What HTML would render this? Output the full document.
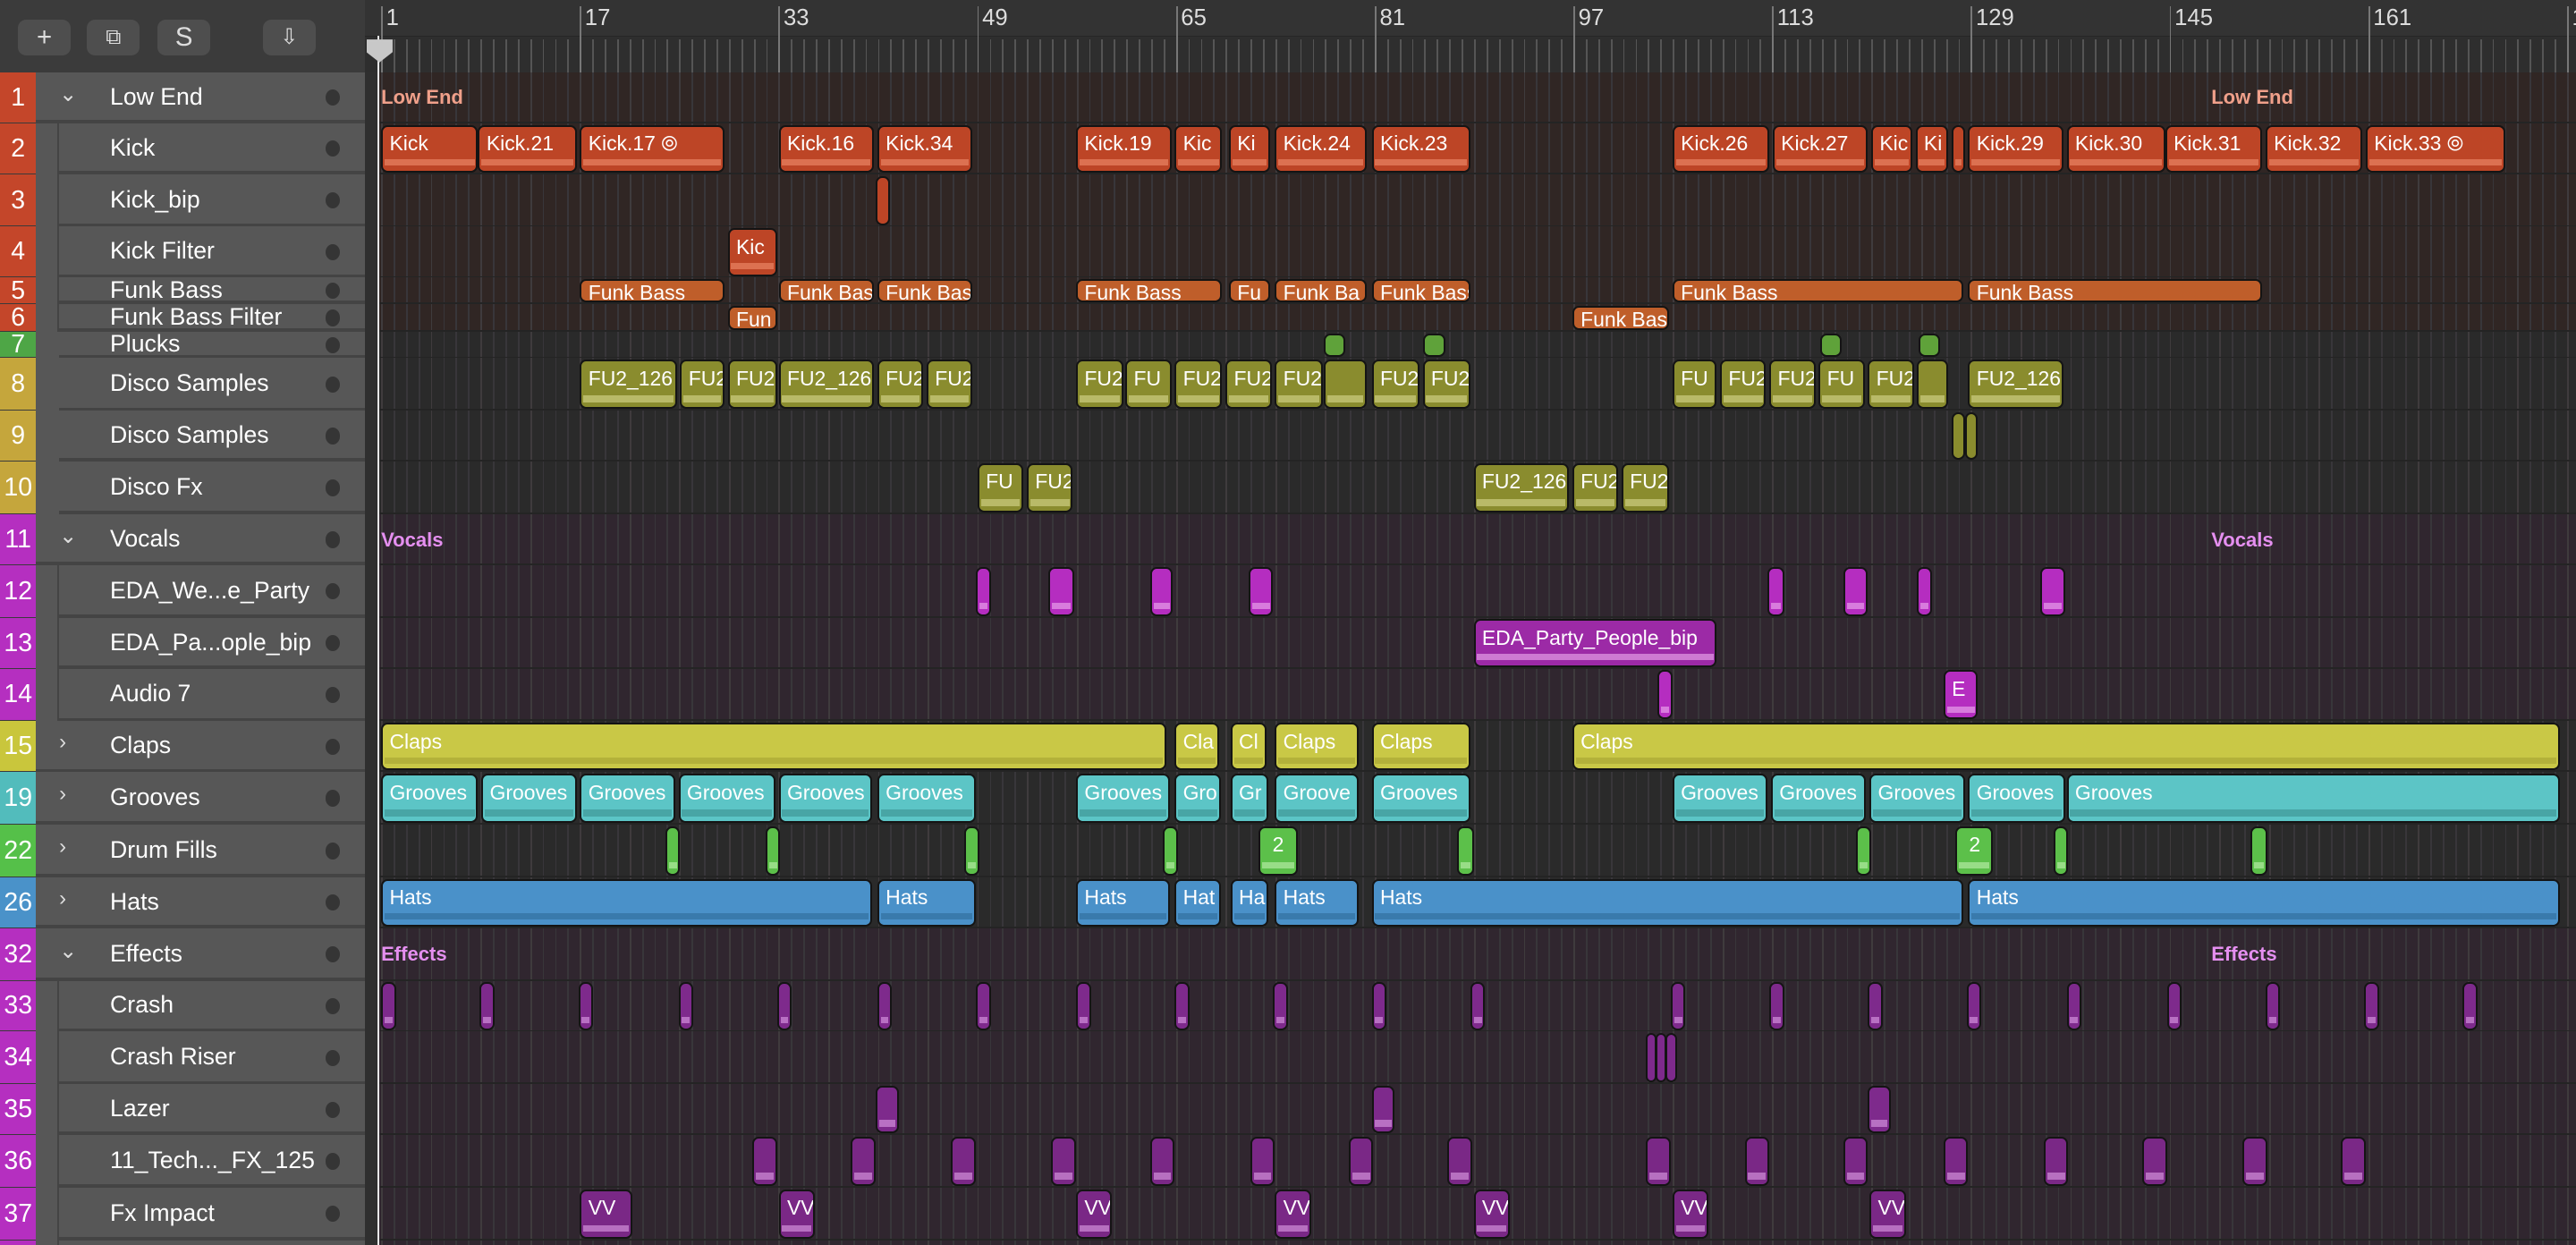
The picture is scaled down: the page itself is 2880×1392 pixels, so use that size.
<!DOCTYPE html>
<html><head><meta charset="utf-8"><style>
*{margin:0;padding:0;box-sizing:border-box}
html,body{width:2880px;height:1392px;overflow:hidden;background:#2b2b2b}
#s{position:absolute;left:0;top:0;width:1568px;height:758px;zoom:1.8367;font-family:"Liberation Sans",sans-serif;overflow:hidden;background:#2a2a2a}
.a{position:absolute}
.r{position:absolute;border:1.5px solid #141414;border-radius:4px;overflow:hidden;color:#fff;font-size:12.5px;white-space:nowrap;padding:3px 0 0 4px}
.r i{position:absolute;left:1px;right:1px;bottom:3px;height:4px;opacity:.6}
.num{position:absolute;left:0;width:22px;color:#fff;font-size:15.5px;text-align:center}
.nm{position:absolute;left:67px;color:#fff;font-size:14.5px}
.dot{position:absolute;left:198px;width:9px;height:10px;border-radius:50%;background:#353535}
.btn{position:absolute;top:12px;width:32px;height:22px;border-radius:5px;background:#4e4e4e;color:#ddd;font-size:16px;text-align:center;line-height:22px}
</style></head><body><div id="s">
<div class="a" style="left:0;top:0;width:222px;height:44px;background:#3b3b3b"></div>
<div class="btn" style="left:11px">+</div>
<div class="btn" style="left:53px;font-size:13px">⧉</div>
<div class="btn" style="left:96px">S</div>
<div class="btn" style="left:160px;font-size:13px">⇩</div>
<div class="a" style="left:222px;top:0;width:1346px;height:22px;background:#333"></div>
<div class="a" style="left:222px;top:22px;width:1346px;height:22px;background:#2e2e2e;border-top:1px solid #262626"></div>
<div class="a" style="left:0;top:44px;width:222px;height:714px;background:#575757"></div>
<div id="g"></div>
<div class="a" style="left:230px;top:22px;width:1px;height:736px;background:#e8e8e8"></div>
<div class="a" style="left:223px;top:24px;width:16px;height:14px;background:#c8c8c8;clip-path:polygon(0 0,100% 0,100% 55%,50% 100%,0 55%)"></div>
</div>
<script>
const S=document.getElementById('g');const ad=h=>S.insertAdjacentHTML('beforeend',h);
const bx=b=>232+(b-1)*7.56;
const rows=[[1,44,31,'Low End','#c4462a',1],[2,75,31,'Kick','#c4462a'],[3,106,32,'Kick_bip','#c4462a'],[4,138,31,'Kick Filter','#c4462a'],[5,169,16,'Funk Bass','#c4462a'],[6,185,17,'Funk Bass Filter','#c4462a'],[7,202,16,'Plucks','#4ea646'],[8,218,32,'Disco Samples','#c5a63c'],[9,250,31,'Disco Samples','#c5a63c'],[10,281,32,'Disco Fx','#c5a63c'],[11,313,31,'Vocals','#b52fc0',1],[12,344,32,'EDA_We...e_Party','#b52fc0'],[13,376,31,'EDA_Pa...ople_bip','#b52fc0'],[14,407,32,'Audio 7','#b52fc0'],[15,439,31,'Claps','#c9c63c',2],[19,470,32,'Grooves','#52bcbc',2],[22,502,32,'Drum Fills','#55c049',2],[26,534,31,'Hats','#4a92c9',2],[32,565,32,'Effects','#b52fc0',1],[33,597,31,'Crash','#b52fc0'],[34,628,32,'Crash Riser','#b52fc0'],[35,660,31,'Lazer','#b52fc0'],[36,691,32,'11_Tech..._FX_125','#b52fc0'],[37,723,32,'Fx Impact','#b52fc0'],[38,755,10,'','#b52fc0']];
const Y={};rows.forEach(r=>Y[r[0]]=[r[1],r[2]]);
function bg(y,h,c){ad(`<div class="a" style="left:222px;top:${y}px;width:1346px;height:${h}px;background:${c}"></div>`)}
bg(44,158,'#302624');bg(313,126,'#30262f');bg(565,193,'#30262f');
let gl='';for(let b=1;b<=178;b++){const x=bx(b);gl+=`<div class="a" style="left:${x}px;top:44px;width:1px;height:714px;background:${(b-1)%4==0?'#3f3b3d':'#38363a'}"></div>`;
gl+=`<div class="a" style="left:${x}px;top:${(b-1)%16==0?4:24}px;width:1px;height:${(b-1)%16==0?40:20}px;background:${(b-1)%16==0?'#777':'#555'}"></div>`;
if((b-1)%16==0)gl+=`<div class="a" style="left:${x+3}px;top:3px;color:#ddd;font-size:14px">${b}</div>`;}
ad(gl);
rows.forEach(r=>{bg(r[1]+r[2]-1,1,'#242424');
ad(`<div class="a" style="left:0;top:${r[1]}px;width:22px;height:${r[2]}px;background:${r[4]};border-bottom:1px solid #3a3a3a"></div>`);
if(r[3]){ad(`<div class="num" style="top:${r[1]+r[2]/2-9}px">${r[0]}</div>`);
ad(`<div class="a" style="left:${r[5]?22:36}px;top:${r[1]+r[2]-2}px;width:${r[5]?200:186}px;height:2px;background:#444"></div>`);
ad(`<div class="nm" style="top:${r[1]+r[2]/2-9}px">${r[3]}</div>`);
ad(`<div class="dot" style="top:${r[1]+r[2]/2-5}px"></div>`);
if(r[5])ad(`<div class="a" style="left:36px;top:${r[1]+r[2]/2-10}px;color:#ddd;font-size:13px">${r[5]==1?'⌄':'›'}</div>`);}
});
ad(`<div class="a" style="left:35px;top:75px;width:1px;height:127px;background:#444"></div><div class="a" style="left:35px;top:344px;width:1px;height:95px;background:#444"></div><div class="a" style="left:35px;top:597px;width:1px;height:161px;background:#444"></div>`);
ad(`<div class="a" style="left:222px;top:44px;width:9px;height:714px;background:#2f2f2f"></div>`);
[[59,'Low End','#f0a08a'],[329,'Vocals','#e58ff0'],[581,'Effects','#e58ff0']].forEach(t=>{ad(`<div class="a" style="left:232px;top:${t[0]-7}px;color:${t[2]};font-size:12px;font-weight:bold">${t[1]}</div><div class="a" style="left:1346px;top:${t[0]-7}px;color:${t[2]};font-size:12px;font-weight:bold">${t[1]}</div>`)});
function R(row,list,c,sub,ins){const [y,h]=Y[row];list.forEach(l=>{const [x1,x2,t]=l;
ad(`<div class="r" style="left:${x1}px;top:${y+1}px;width:${x2-x1}px;height:${h-2}px;background:${c};${ins||''}">${t||''}${sub?`<i style="background:${sub}"></i>`:''}</div>`)})}
R(2,[[232,291,'Kick'],[291,351,'Kick.21'],[353,441,'Kick.17 ⦾'],[474,532,'Kick.16'],[534,592,'Kick.34'],[655,713,'Kick.19'],[715,744,'Kic'],[748,773,'Ki'],[776,832,'Kick.24'],[835,895,'Kick.23'],[1018,1077,'Kick.26'],[1079,1137,'Kick.27'],[1139,1164,'Kic'],[1166,1186,'Ki'],[1188,1196,''],[1198,1256,'Kick.29'],[1258,1318,'Kick.30'],[1318,1377,'Kick.31'],[1379,1438,'Kick.32'],[1440,1525,'Kick.33 ⦾']],'#bd4526','#f0906e');
R(3,[[533,542,'']],'#bd4526');
R(4,[[443,473,'Kic']],'#bd4526','#f0906e');
const fb='font-size:12.5px;padding-top:0;line-height:15px';
R(5,[[353,441,'Funk Bass'],[474,532,'Funk Bas'],[534,592,'Funk Bas'],[655,744,'Funk Bass'],[748,773,'Fu'],[776,832,'Funk Ba'],[835,895,'Funk Bass'],[1018,1195,'Funk Bass'],[1198,1377,'Funk Bass']],'#bf5e2a',0,fb);
R(6,[[443,473,'Fun'],[957,1016,'Funk Bas']],'#bf5e2a',0,fb);
R(7,[[806,819],[866,880],[1108,1121],[1168,1181]],'#5fa23a');
R(8,[[353,412,'FU2_126'],[414,441,'FU2'],[443,473,'FU2'],[474,532,'FU2_126'],[534,562,'FU2'],[564,592,'FU2'],[655,684,'FU2'],[685,713,'FU'],[715,744,'FU2'],[746,774,'FU2'],[776,805,'FU2'],[806,832,''],[835,864,'FU2'],[866,895,'FU2'],[1018,1045,'FU'],[1047,1075,'FU2'],[1077,1105,'FU2'],[1107,1135,'FU'],[1137,1165,'FU2'],[1167,1186,''],[1198,1256,'FU2_126']],'#8a8c2e','#d8d890');
R(9,[[1188,1196],[1196,1204]],'#8a8c2e');
R(10,[[595,623,'FU'],[625,653,'FU2'],[897,955,'FU2_126'],[957,985,'FU2'],[987,1016,'FU2']],'#8a8c2e','#d8d890');
R(12,[[594,603],[638,654],[700,714],[760,775],[1076,1086],[1122,1137],[1167,1176],[1242,1257]],'#b52dc0','#f0b0f0');
R(13,[[897,1045,'EDA_Party_People_bip']],'#9c2aa6','#f0b0f0');
R(14,[[1009,1018],[1183,1204,'E']],'#b52dc0','#f0b0f0');
R(15,[[232,710,'Claps'],[715,742,'Cla'],[749,771,'Cl'],[776,827,'Claps'],[835,895,'Claps'],[957,1558,'Claps']],'#c9c846','#a5a232');
R(19,[[232,291,'Grooves'],[293,351,'Grooves'],[353,411,'Grooves'],[413,472,'Grooves'],[474,531,'Grooves'],[534,594,'Grooves'],[655,712,'Grooves'],[715,743,'Gro'],[749,772,'Gr'],[776,827,'Groove'],[835,895,'Grooves'],[1018,1076,'Grooves'],[1078,1136,'Grooves'],[1138,1196,'Grooves'],[1198,1257,'Grooves'],[1258,1558,'Grooves']],'#5cc5c6','#3a9090');
R(22,[[405,414],[466,475],[587,596],[708,717],[766,790,'&nbsp;2'],[887,897],[1130,1139],[1190,1213,'&nbsp;2'],[1250,1259],[1370,1380]],'#5cc04a','#c0f0b0');
R(26,[[232,531,'Hats'],[534,594,'Hats'],[655,712,'Hats'],[715,743,'Hat'],[749,772,'Ha'],[776,827,'Hats'],[835,1195,'Hats'],[1198,1558,'Hats']],'#4a91c9','#2f6a9a');
R(33,[232,292,352,413,473,534,594,655,715,775,835,895,1017,1077,1137,1197,1258,1319,1379,1439,1499].map(x=>[x,x+9]),'#7e2a8c','#e0a0e8');
R(34,[[1002,1008],[1008,1014],[1014,1021]],'#7e2a8c');
R(35,[[533,547],[835,849],[1137,1151]],'#7e2a8c','#e0a0e8');
R(36,[458,518,579,640,700,761,821,881,1002,1062,1122,1183,1244,1304,1365,1425].map(x=>[x,x+15]),'#7a2886','#e0a0e8');
R(37,[[353,385,'VV'],[474,496,'VV'],[655,677,'VV'],[776,798,'VV'],[897,919,'VV'],[1018,1040,'VV'],[1138,1160,'VV']],'#7a2886','#e0a0e8');
</script>
</body></html>
